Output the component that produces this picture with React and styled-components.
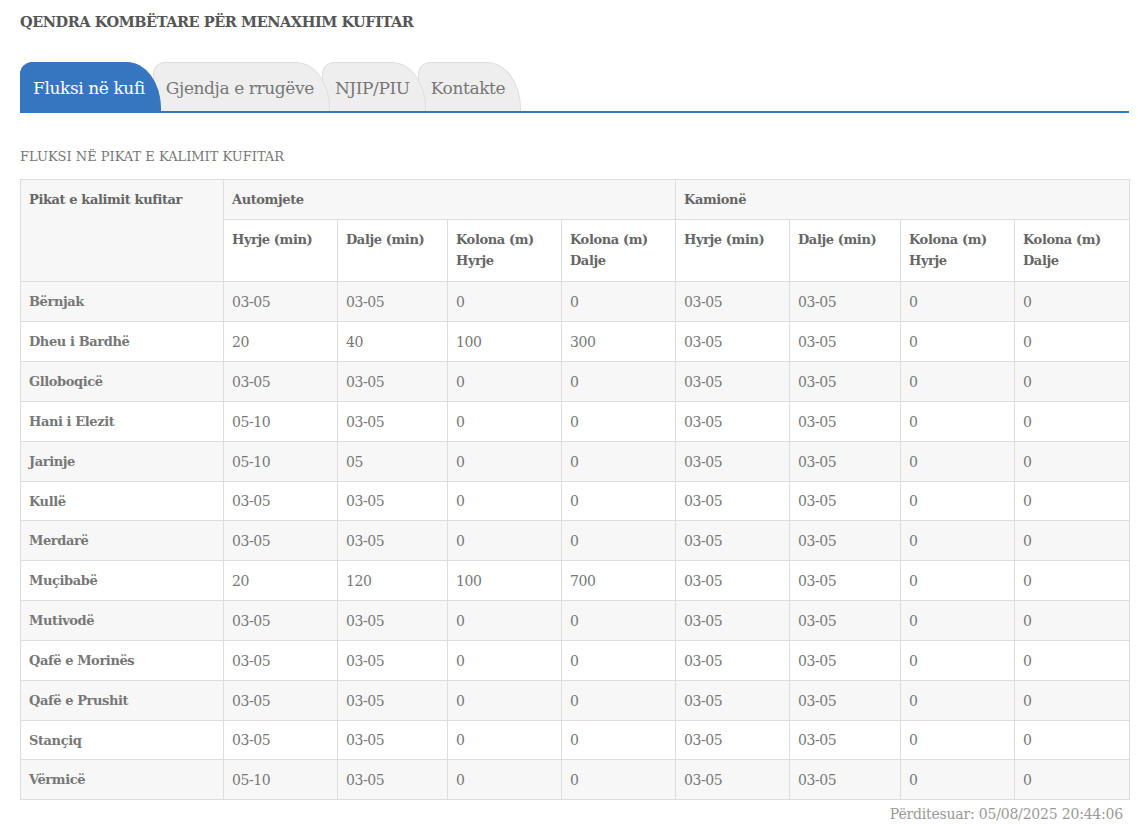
import React from "react"
import styled, {createGlobalStyle} from "styled-components"

const GlobalStyle = createGlobalStyle`
  body {
    margin: 0;
    background: #fff;
    font-family: "DejaVu Serif", "Liberation Serif", serif;
    color: #666;
  }
`

const Page = styled.div`
  padding: 12px 9px 0 20px;
`

const Title = styled.h1`
  margin: 0;
  font-size: 14.5px;
  font-weight: bold;
  color: #555;
  letter-spacing: -0.45px;
  line-height: 20px;
`

const TabBar = styled.div`
  display: flex;
  margin-top: 30px;
  height: 49px;
  border-bottom: 2px solid #3676c0;
`

const Tab = styled.div`
  position: relative;
  z-index: ${p => p.$z};
  margin-left: ${p => (p.$first ? 0 : -8)}px;
  padding: 15px 15px 0 12px;
  font-size: 17px;
  letter-spacing: -0.4px;
  white-space: nowrap;
  background: ${p => (p.$active ? "#3676c0" : "#eee")};
  color: ${p => (p.$active ? "#fff" : "#777")};
  border: 1px solid ${p => (p.$active ? "#3676c0" : "#ddd")};
  border-bottom: none;
  border-radius: 12px 34px 0 0 / 12px 46px 0 0;
`

const Section = styled.div`
  margin-top: 36px;
  font-size: 13px;
  color: #777;
  text-transform: uppercase;
  letter-spacing: 0;
`

const Table = styled.table`
  margin-top: 15px;
  width: 100%;
  border-collapse: collapse;
  table-layout: fixed;
  font-size: 13px;
  border: 1px solid #ddd;
`

const Row = styled.tr`
  background: ${p => (p.$shade ? "#f7f7f7" : "#fff")};
  height: ${p => p.$h}px;
`

const Head = styled.th`
  border: 1px solid #ddd;
  text-align: left;
  vertical-align: top;
  padding: 9px 8px 0 8px;
  font-weight: bold;
  color: #666;
  line-height: 21px;
  letter-spacing: -0.4px;
`

const Cell = styled.td`
  border: 1px solid #ddd;
  padding: 0 8px;
  vertical-align: middle;
  color: #777;
  font-size: ${p => (p.$name ? 13 : 14)}px;
  font-weight: ${p => (p.$name ? "bold" : "normal")};
  letter-spacing: -0.4px;
`

const Updated = styled.div`
  text-align: right;
  font-size: 14px;
  color: #999;
  padding: 6px 6px 0 0;
  letter-spacing: -0.2px;
`

const widths = [203, 114, 110, 114, 114, 114, 111, 114, 115]

const rows = [
    ["Bërnjak", "03-05", "03-05", "0", "0", "03-05", "03-05", "0", "0"],
    ["Dheu i Bardhë", "20", "40", "100", "300", "03-05", "03-05", "0", "0"],
    ["Glloboqicë", "03-05", "03-05", "0", "0", "03-05", "03-05", "0", "0"],
    ["Hani i Elezit", "05-10", "03-05", "0", "0", "03-05", "03-05", "0", "0"],
    ["Jarinje", "05-10", "05", "0", "0", "03-05", "03-05", "0", "0"],
    ["Kullë", "03-05", "03-05", "0", "0", "03-05", "03-05", "0", "0"],
    ["Merdarë", "03-05", "03-05", "0", "0", "03-05", "03-05", "0", "0"],
    ["Muçibabë", "20", "120", "100", "700", "03-05", "03-05", "0", "0"],
    ["Mutivodë", "03-05", "03-05", "0", "0", "03-05", "03-05", "0", "0"],
    ["Qafë e Morinës", "03-05", "03-05", "0", "0", "03-05", "03-05", "0", "0"],
    ["Qafë e Prushit", "03-05", "03-05", "0", "0", "03-05", "03-05", "0", "0"],
    ["Stançiq", "03-05", "03-05", "0", "0", "03-05", "03-05", "0", "0"],
    ["Vërmicë", "05-10", "03-05", "0", "0", "03-05", "03-05", "0", "0"],
]

const subHeads = [
    ["Hyrje (min)"], ["Dalje (min)"], ["Kolona (m)", "Hyrje"], ["Kolona (m)", "Dalje"],
]

const tabs = ["Fluksi në kufi", "Gjendja e rrugëve", "NJIP/PIU", "Kontakte"]

const App = () => {
    return (
        <Page>
            <GlobalStyle/>
            <Title>QENDRA KOMBËTARE PËR MENAXHIM KUFITAR</Title>

            <TabBar>
                {tabs.map((t, i) => (
                    <Tab key={t} $first={i === 0} $active={i === 0} $z={10 - i}>{t}</Tab>
                ))}
            </TabBar>

            <Section>Fluksi në pikat e kalimit kufitar</Section>

            <Table>
                <colgroup>
                    {widths.map((w, i) => <col key={i} style={{width: w}}/>)}
                </colgroup>
                <thead>
                <Row $shade $h={40}>
                    <Head rowSpan={2}>Pikat e kalimit kufitar</Head>
                    <Head colSpan={4}>Automjete</Head>
                    <Head colSpan={4}>Kamionë</Head>
                </Row>
                <Row $h={62}>
                    {[...subHeads, ...subHeads].map((h, i) => (
                        <Head key={i}>{h[0]}{h[1] && <><br/>{h[1]}</>}</Head>
                    ))}
                </Row>
                </thead>
                <tbody>
                {rows.map((r, i) => (
                    <Row key={r[0]} $shade={i % 2 === 0} $h={i % 6 === 5 ? 39 : 40}>
                        {r.map((v, j) => <Cell key={j} $name={j === 0}>{v}</Cell>)}
                    </Row>
                ))}
                </tbody>
            </Table>

            <Updated>Përditesuar: 05/08/2025 20:44:06</Updated>
        </Page>
    )
}

export default App
